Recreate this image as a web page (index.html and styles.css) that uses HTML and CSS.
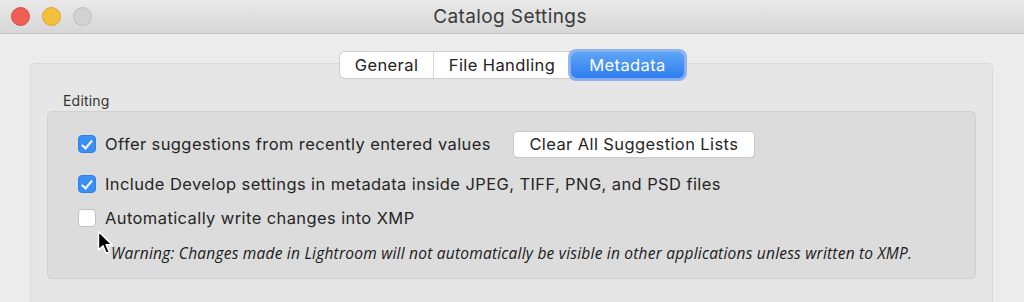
FILE: index.html
```html
<!DOCTYPE html>
<html lang="en">
<head>
    <meta charset="utf-8" />
    <title>Catalog Settings</title>
    <link rel="stylesheet" href="styles.css">
</head>
<body>
<div class="window">
    <div class="titlebar">
        <div class="lights">
            <span class="light red"></span>
            <span class="light yellow"></span>
            <span class="light gray"></span>
        </div>
        <div class="title">Catalog Settings</div>
    </div>

    <div class="content">
        <div class="tabbox">
            <div class="tabs">
                <button type="button" class="tab t-general">General</button>
                <button type="button" class="tab t-files">File Handling</button>
                <button type="button" class="tab t-meta active">Metadata</button>
            </div>

            <div class="group-label">Editing</div>
            <div class="group">
                <div class="row">
                    <label class="check"><span class="box on"></span>Offer suggestions from recently entered values</label>
                    <button type="button" class="push">Clear All Suggestion Lists</button>
                </div>
                <div class="row">
                    <label class="check"><span class="box on"></span>Include Develop settings in metadata inside JPEG, TIFF, PNG, and PSD files</label>
                </div>
                <div class="row">
                    <label class="check"><span class="box"></span>Automatically write changes into XMP</label>
                </div>
                <p class="warning">Warning: Changes made in Lightroom will not automatically be visible in other applications unless written to XMP.</p>

                <svg class="cursor" width="18" height="26" viewBox="0 0 18 26">
                    <path d="M1.5 1.5 L1.5 20 L6 15.8 L9.2 23.2 L12.2 21.9 L9.1 14.7 L15 14.7 Z" fill="#000" stroke="#fff" stroke-width="1.4" stroke-linejoin="round"/>
                </svg>
            </div>
        </div>
    </div>
</div>
</body>
</html>
```

FILE: styles.css
```css
html,body{margin:0;padding:0}
body{font-family:Inter,"Noto Sans",sans-serif;background:#ececec;color:#262626;width:1024px;height:302px;overflow:hidden}

.titlebar{position:relative;height:33px;background:linear-gradient(#e9e9e9,#d7d7d7);border-bottom:1px solid #c4c4c4;display:flex;align-items:center;justify-content:center}
.lights{position:absolute;left:11px;top:7px;display:flex;gap:12px}
.light{width:19px;height:19px;border-radius:50%;box-sizing:border-box}
.light.red{background:#ee5f57;border:1px solid #d94c44}
.light.yellow{background:#f6bf3b;border:1px solid #dca42d}
.light.gray{background:#d2d2d2;border:1px solid #bdbdbd}
.title{font-size:19px;color:#3a3a3a;letter-spacing:0.4px;margin-left:-4px}

.content{padding:29px 31px 0 30px}
.tabbox{position:relative;background:#e6e6e6;border:1px solid #dadada;border-bottom:none;border-radius:5px 5px 0 0;height:238px;padding:0 16px}
.tabs{position:absolute;top:-12px;left:309px;display:flex;background:#fff;border-radius:5px;box-shadow:0 0 0 1px #cfcfcf,0 1px 1px rgba(0,0,0,0.15)}
.tab{font-family:inherit;font-size:16.5px;letter-spacing:0.4px;color:#222;background:none;border:none;border-right:1px solid #d6d6d6;padding:0;height:26px;margin:0;box-sizing:border-box;text-align:center}
.t-general{width:94px}
.t-files{width:137px}
.t-meta{width:113px}
.tab.active{border-right:none;color:#fff;background:linear-gradient(#5ea5f7,#2f7ef0);border-radius:5px;box-shadow:0 0 0 3px rgba(110,160,245,0.75)}

.group-label{font-size:14px;letter-spacing:0.2px;color:#333;padding:28px 0 0 16px;height:19px}
.group{position:relative;background:#dcdcdc;border:1px solid #d1d1d1;border-radius:5px;height:168px;padding:16px 0 0 30px;box-sizing:border-box}
.row{display:flex;align-items:center;height:34px}
.row:first-child{height:32px;margin-bottom:7px}
.check{display:flex;align-items:center;font-size:16.5px;letter-spacing:0.4px;color:#262626}
.box{width:18px;height:18px;border-radius:4px;box-sizing:border-box;background:#fff;border:1px solid #c2c2c2;margin-right:9px;position:relative}
.box.on{background:#3b8ff5;border-color:#2f80e8}
.box.on::after{content:"";position:absolute;left:5px;top:2px;width:4px;height:9px;border:solid #fff;border-width:0 2px 2px 0;transform:rotate(40deg)}
.push{font-family:inherit;font-size:16.5px;letter-spacing:0.4px;color:#262626;background:#fff;border:none;border-radius:4px;box-shadow:0 0 0 1px #cacaca,0 1px 1px rgba(0,0,0,0.2);height:25px;width:240px;padding:0;margin-left:23px}
.warning{margin:7px 0 0 33px;font-family:"Open Sans",sans-serif;font-style:italic;font-size:15.5px;color:#1a1a1a;letter-spacing:0.22px}
.cursor{position:absolute;left:49px;top:118px}
```
